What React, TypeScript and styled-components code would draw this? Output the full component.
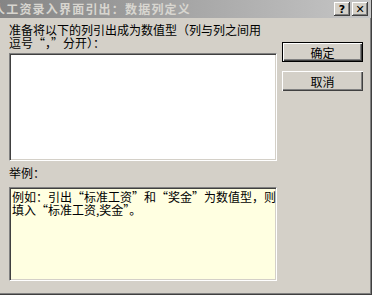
import React from "react";
import styled, { createGlobalStyle } from "styled-components";

const Global = createGlobalStyle`
  html, body { margin: 0; padding: 0; background: #d4d0c8; }
  body { font-family: "Noto Sans CJK SC", "DejaVu Sans", sans-serif; }
`;

const Win = styled.div`
  width: 372px;
  height: 295px;
  box-sizing: border-box;
  background: #d4d0c8;
  display: flex;
  flex-direction: column;
  overflow: hidden;
  border-right: 1px solid #404040;
  border-bottom: 1px solid #404040;
  box-shadow: inset -1px -1px 0 #808080;
  padding-bottom: 2px;
`;

const TitleBar = styled.div`
  height: 18px;
  flex: none;
  display: flex;
  align-items: center;
  background: linear-gradient(to right, #858585, #c6c6c6);
  padding-right: 3px;
  overflow: hidden;
`;

const TitleText = styled.div`
  flex: 1;
  color: #d8d6d0;
  font-size: 12px;
  line-height: 14px;
  font-weight: bold;
  letter-spacing: 1.2px;
  white-space: nowrap;
  overflow: hidden;
  margin-left: -7px;
`;

const CapBtn = styled.div<{ $gap?: boolean }>`
  width: 16px;
  height: 14px;
  flex: none;
  box-sizing: border-box;
  background: #d4d0c8;
  margin-left: ${(p) => (p.$gap ? "2px" : "0")};
  box-shadow: inset -1px -1px 0 #404040, inset 1px 1px 0 #ffffff,
    inset -2px -2px 0 #808080;
  display: flex;
  align-items: center;
  justify-content: center;
  font-family: "DejaVu Sans", sans-serif;
  font-weight: bold;
  font-size: 11px;
  color: #000;
  line-height: 1;
`;

const Body = styled.div`
  flex: 1;
  display: flex;
  padding: 5px 0 0 9px;
`;

const LeftCol = styled.div`
  width: 268px;
  display: flex;
  flex-direction: column;
`;

const Label = styled.div<{ $mt?: number }>`
  font-size: 12px;
  line-height: 13px;
  color: #000;
  margin-top: ${(p) => p.$mt ?? 0}px;
  white-space: pre;
`;

const Sunken = styled.div<{ $bg: string; $h: number; $mt: number }>`
  height: ${(p) => p.$h}px;
  margin-top: ${(p) => p.$mt}px;
  box-sizing: border-box;
  background: ${(p) => p.$bg};
  border-top: 1px solid #808080;
  border-left: 1px solid #808080;
  border-bottom: 1px solid #ffffff;
  border-right: 1px solid #ffffff;
  box-shadow: inset 1px 1px 0 #404040, inset -1px -1px 0 #d4d0c8;
  padding: 2px 2px;
`;

const ExampleText = styled.div`
  font-size: 12px;
  line-height: 13px;
  color: #000;
  white-space: pre;
`;

const RightCol = styled.div`
  margin-left: 5px;
  padding-top: 19px;
  display: flex;
  flex-direction: column;
  gap: 9px;
`;

const Btn = styled.div<{ $def?: boolean }>`
  width: 81px;
  height: 20px;
  box-sizing: border-box;
  background: #d4d0c8;
  display: flex;
  align-items: center;
  justify-content: center;
  font-size: 12px;
  color: #000;
  border: ${(p) => (p.$def ? "1px solid #000" : "none")};
  box-shadow: inset 1px 1px 0 #ffffff, inset -1px -1px 0 #404040,
    inset -2px -2px 0 #808080;
`;

export default function App() {
  return (
    <>
      <Global />
      <Win lang="zh-CN">
        <TitleBar>
          <TitleText>人工资录入界面引出：数据列定义</TitleText>
          <CapBtn>?</CapBtn>
          <CapBtn $gap>✕</CapBtn>
        </TitleBar>
        <Body>
          <LeftCol>
            <Label>{"准备将以下的列引出成为数值型（列与列之间用\n逗号“，”分开）："}</Label>
            <Sunken $bg="#ffffff" $h={108} $mt={4} />
            <Label $mt={5}>举例：</Label>
            <Sunken $bg="#ffffe1" $h={94} $mt={8}>
              <ExampleText>
                {"例如：引出“标准工资”和“奖金”为数值型，则\n填入“标准工资,奖金”。"}
              </ExampleText>
            </Sunken>
          </LeftCol>
          <RightCol>
            <Btn $def>确定</Btn>
            <Btn>取消</Btn>
          </RightCol>
        </Body>
      </Win>
    </>
  );
}
